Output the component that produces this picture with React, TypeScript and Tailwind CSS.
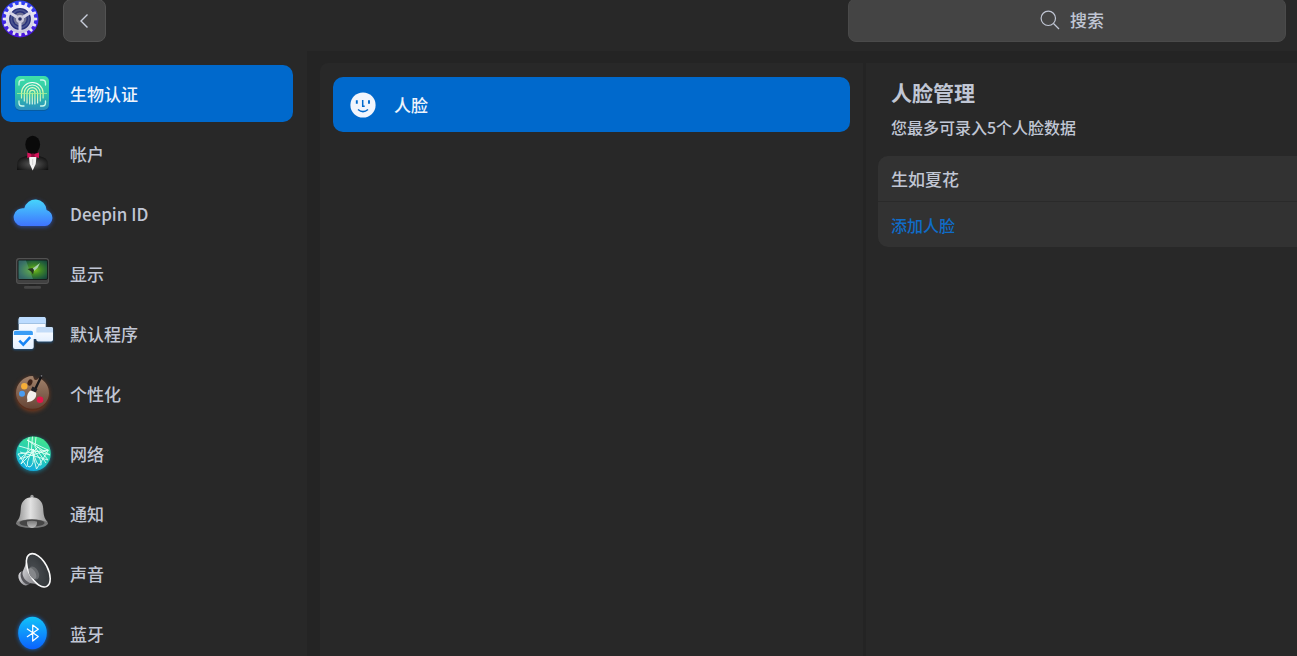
import type { ReactNode } from "react";

function LogoIcon() {
  const teeth = Array.from({ length: 16 }, (_, i) => i * 22.5);
  return (
    <svg viewBox="0 0 38 38" className="size-[38px] shrink-0" aria-hidden="true">
      <defs>
        <linearGradient id="logoBg" x1="0" y1="0" x2="0" y2="1">
          <stop offset="0" stopColor="#2f45f5" />
          <stop offset="1" stopColor="#4a12d8" />
        </linearGradient>
        <linearGradient id="logoGear" x1="0" y1="0" x2="0" y2="1">
          <stop offset="0" stopColor="#f3f2fb" />
          <stop offset="1" stopColor="#c9c6dc" />
        </linearGradient>
      </defs>
      <circle cx="19" cy="19" r="18.5" fill="url(#logoBg)" />
      {teeth.map((a) => (
        <path key={a} d="M17.4 6 17.8 1.8h2.4L20.6 6Z" fill="#e6e4f3" transform={`rotate(${a} 19 19)`} />
      ))}
      <circle cx="19" cy="19" r="12.6" fill="#28307a" stroke="url(#logoGear)" strokeWidth="3.4" />
      <circle cx="19" cy="19" r="8.8" fill="none" stroke="#4b5590" strokeWidth="1.8" />
      <circle cx="19" cy="19" r="6.5" fill="#6f7294" />
      <path d="M19 19 8.5 12.5M19 19l10.5-6.500M19 19v12" stroke="#d6d4e6" strokeWidth="3" />
      <circle cx="19" cy="19" r="4" fill="#c9c7da" />
      <circle cx="19" cy="19" r="1.8" fill="#2a2f66" />
    </svg>
  );
}

function FingerprintIcon() {
  return (
    <>
      <defs>
        <linearGradient id="fpBg" x1="0" y1="0" x2="0" y2="1">
          <stop offset="0" stopColor="#3fe0a8" />
          <stop offset="0.55" stopColor="#2fbfa8" />
          <stop offset="1" stopColor="#2a8fc0" />
        </linearGradient>
        <linearGradient id="fpLine" x1="0" y1="17" x2="0" y2="40" gradientUnits="userSpaceOnUse">
          <stop offset="0" stopColor="#ffffff" />
          <stop offset="0.5" stopColor="#c8f59a" />
          <stop offset="1" stopColor="#d8f5f5" />
        </linearGradient>
      </defs>
      <rect x="11" y="12" width="34" height="34" rx="5" fill="#0b4f77" opacity="0.5" />
      <rect x="11" y="11" width="34" height="34" rx="5" fill="url(#fpBg)" />
      <path
        d="M15 20v-2q0-3 3-3h2M36.5 15h2q3 0 3 3v2M41.5 36v2q0 3-3 3h-2M20 41h-2q-3 0-3-3v-2"
        fill="none" stroke="#c9f7ea" strokeWidth="1.3" strokeLinecap="round"
      />
      <g fill="none" stroke="url(#fpLine)" strokeWidth="1.2" strokeLinecap="round">
        <path d="M17.5 33v-5a10.8 10.5 0 0 1 21.600 0v5" />
        <path d="M20.300 36v-8a8 8 0 0 1 16 0v8" />
        <path d="M23 38V28a5.300 5.300 0 0 1 10.600 0v10" />
        <path d="M25.700 39V28a2.600 2.600 0 0 1 5.200 0v11" />
        <path d="M28.300 28v11" />
      </g>
      <path d="M13 28.5h30" stroke="#a9f29a" strokeWidth="1" opacity="0.8" />
    </>
  );
}

function AccountIcon() {
  return (
    <>
      <defs>
        <radialGradient id="acSuit" cx="0.5" cy="0.6" r="0.6">
          <stop offset="0" stopColor="#5a5a5a" />
          <stop offset="1" stopColor="#111111" />
        </radialGradient>
      </defs>
      <ellipse cx="28.7" cy="19.5" rx="7.4" ry="8.7" fill="#0a0a0a" />
      <path d="M24 25h9.5v6H24z" fill="#0a0a0a" />
      <path d="M13 45v-5q0-6 5-7.500l6-2h9.500l6 2q4.700 1.500 4.700 7.500v5Z" fill="url(#acSuit)" />
      <path d="M25 32h7.500l-.8 7-3 6.500-3-6.500Z" fill="#f4f4f4" />
      <path d="M28.7 34v6" stroke="#bbbbbb" strokeWidth="0.6" />
      <path d="m23.300 27.500 4.700 1.500v2.500l-4.700 1.500ZM35 27.500l-5 1.500v2.500l5 1.500Z" fill="#d4145a" />
      <rect x="27.300" y="28.600" width="3.200" height="3.300" rx="0.700" fill="#8e0d3c" />
    </>
  );
}

function CloudIcon() {
  return (
    <>
      <defs>
        <linearGradient id="cloudBg" x1="0" y1="0" x2="0" y2="1">
          <stop offset="0" stopColor="#46d5fb" />
          <stop offset="1" stopColor="#3f74ff" />
        </linearGradient>
      </defs>
      <path
        d="M17 41a9 9 0 1 1 3.300-17.700a11.300 11.300 0 0 1 22.300 1.700A8.200 8.200 0 0 1 41 41Z"
        fill="url(#cloudBg)" className="drop-shadow-[0_1px_2px_#2f60e0aa]"
      />
    </>
  );
}

function DisplayIcon() {
  return (
    <>
      <defs>
        <radialGradient id="dpScreen" cx="0.55" cy="0.5" r="0.6">
          <stop offset="0" stopColor="#7fc21c" />
          <stop offset="0.4" stopColor="#3f8726" />
          <stop offset="0.8" stopColor="#1f5a3c" />
          <stop offset="1" stopColor="#174638" />
        </radialGradient>
      </defs>
      <rect x="25" y="38" width="7" height="4" fill="#252525" />
      <rect x="20" y="41" width="17" height="2.8" rx="1.2" fill="#454545" />
      <rect x="12" y="13" width="33" height="26" rx="3" fill="#414141" />
      <rect x="12.5" y="13.5" width="32" height="25" rx="2.5" fill="none" stroke="#555555" strokeWidth="0.8" />
      <rect x="14" y="15" width="29.6" height="19.5" rx="1.5" fill="url(#dpScreen)" stroke="#111111" strokeWidth="0.8" />
      <path d="M14.5 15.5H22l7 18.500H14.500Z" fill="#8fc6e8" opacity="0.25" />
      <path d="m28 24 8-6-2.500 5-3.500 3Z" fill="#a9cfae" />
      <path d="m23.500 24 5-1 1.500 2-1 4.500-2-3Z" fill="#25351f" />
    </>
  );
}

function DefaultAppsIcon() {
  return (
    <>
      <defs>
        <linearGradient id="daPaper" x1="0" y1="0" x2="0" y2="1">
          <stop offset="0" stopColor="#ffffff" />
          <stop offset="1" stopColor="#e4f0ff" />
        </linearGradient>
      </defs>
      <g className="drop-shadow-[0_1px_1px_#1d66a8aa]">
        <rect x="14.7" y="12" width="27" height="22" rx="2" fill="url(#daPaper)" />
        <path d="M14.7 18.500V14q0-2 2-2h23q2 0 2 2v4.500Z" fill="#bcdcff" />
        <path d="M14.7 18.500h27" stroke="#93b7dc" strokeWidth="0.8" />
        <rect x="32.300" y="22" width="16.700" height="14.500" rx="2" fill="url(#daPaper)" />
        <path d="M32.300 27.500V24q0-2 2-2H47q2 0 2 2v3.500Z" fill="#c3dcf8" />
        <rect x="9" y="25" width="20.700" height="19" rx="2" fill="url(#daPaper)" />
        <path d="M9.800 30v-2.500q0-1.700 1.700-1.700h15.700q1.700 0 1.700 1.700V30Z" fill="#3a9df5" />
      </g>
      <path d="m15.300 35.700 4 4 6.900-7.500" fill="none" stroke="#1684f5" strokeWidth="2.6" />
    </>
  );
}

function PaletteIcon() {
  return (
    <>
      <defs>
        <linearGradient id="plWood" x1="0" y1="0" x2="0" y2="1">
          <stop offset="0" stopColor="#a2836c" />
          <stop offset="1" stopColor="#664536" />
        </linearGradient>
      </defs>
      <g className="drop-shadow-[0_1px_2px_#a34a1caa]">
        <path
          d="M28.500 11c1.500 0 .5 3.500 3 4s2-2.500 4.500-1.500c5.500 2.500 9 8 9 14.500a16.500 16.500 0 0 1-33 0c0-9 7.500-17 16.500-17Z"
          fill="#5a2e1d" transform="translate(0 1)"
        />
        <path
          d="M28.500 11c1.500 0 .5 3.500 3 4s2-2.500 4.500-1.500c5.500 2.500 9 8 9 14.500a16.500 15.800 0 0 1-33 0c0-9 7.500-17 16.500-17Z"
          fill="url(#plWood)"
        />
      </g>
      <ellipse cx="26" cy="17.5" rx="2.3" ry="3.2" transform="rotate(25 26 17.5)" fill="#3d2218" />
      <circle cx="20.3" cy="21.3" r="3.2" fill="#f6ae37" />
      <circle cx="18" cy="28.7" r="3" fill="#4a9cf0" />
      <circle cx="36" cy="34.7" r="3.3" fill="#e5164a" />
      <path d="m31.500 23.500 6-12.500" stroke="#17171a" strokeWidth="2.4" strokeLinecap="round" />
      <circle cx="37.5" cy="10.8" r="0.9" fill="#77777c" />
      <path d="m28.500 21.500 5 2.500-1.700 3.500-5-2.200Z" fill="#1f1f24" />
      <path d="m26.800 25.500 5.300 2.200c1 5-2.500 8.800-9.300 9.500 1.500-2-.3-3.700.5-6.700.7-2.500 1.700-4 3.500-5Z" fill="#f3f0ec" />
    </>
  );
}

function NetworkIcon() {
  return (
    <>
      <defs>
        <linearGradient id="nwBg" x1="0.7" y1="0" x2="0.3" y2="1">
          <stop offset="0" stopColor="#43e68c" />
          <stop offset="0.5" stopColor="#26cdb4" />
          <stop offset="1" stopColor="#11a9e4" />
        </linearGradient>
        <clipPath id="nwClip"><circle cx="29.5" cy="28.7" r="17.2" /></clipPath>
      </defs>
      <circle cx="29.5" cy="28.7" r="17.3" fill="url(#nwBg)" className="drop-shadow-[0_1px_2px_#10a4c8aa]" />
      <g clipPath="url(#nwClip)" fill="none" stroke="#e2fff5" strokeWidth="0.9">
        <path d="m15 21 31 9-23-15 21 10-30 4 9 13M28.500 11l-1 13-12 10 29-9-12 19-5-20" />
        <path d="m25 12-1 13-7 14 17-17 10 13-28-8M32 12l-1 10 11 16" />
        <path d="M29 24q-9 17-4 18 6 0 4-18 3 18 8 16 2-3-8-16" />
      </g>
    </>
  );
}

function BellIcon() {
  return (
    <>
      <defs>
        <linearGradient id="blBody" x1="0" y1="0" x2="1" y2="0">
          <stop offset="0" stopColor="#8d8d8d" />
          <stop offset="0.45" stopColor="#e2e2e2" />
          <stop offset="1" stopColor="#949494" />
        </linearGradient>
        <linearGradient id="blBall" x1="0" y1="0" x2="0" y2="1">
          <stop offset="0" stopColor="#7b7b7b" />
          <stop offset="1" stopColor="#bdbdbd" />
        </linearGradient>
      </defs>
      <circle cx="28" cy="11.5" r="1.7" fill="#9c9c9c" />
      <ellipse cx="28" cy="38.3" rx="16" ry="4.8" fill="#777777" />
      <path d="M28 12.300c7 0 10.800 4.700 11.200 11 .4 6 .5 9.500 4.500 14-8-4-23.400-4-31.400 0 4-4.500 4.100-8 4.500-14 .4-6.300 4.200-11 11.200-11Z" fill="url(#blBody)" />
      <ellipse cx="28" cy="38" rx="12.5" ry="3.4" fill="#454545" />
      <path d="M23 36.500q5-1.300 10 0v1.500a5 5 0 0 1-10 0Z" fill="url(#blBall)" />
    </>
  );
}

function SoundIcon() {
  return (
    <>
      <defs>
        <linearGradient id="sdBack" x1="0" y1="0" x2="1" y2="1">
          <stop offset="0" stopColor="#ededf0" />
          <stop offset="0.5" stopColor="#a4a4a8" />
          <stop offset="1" stopColor="#77777b" />
        </linearGradient>
        <radialGradient id="sdCone" cx="0.35" cy="0.45" r="0.6">
          <stop offset="0" stopColor="#484c50" />
          <stop offset="1" stopColor="#34383b" />
        </radialGradient>
      </defs>
      <ellipse cx="20" cy="33.5" rx="5" ry="7.5" transform="rotate(-28 20 33.5)" fill="url(#sdBack)" />
      <ellipse cx="22" cy="32.5" rx="4.7" ry="7.5" transform="rotate(-28 22 32.5)" fill="#55555a" />
      <path d="M26 8.500c-4 3-3 7-5 12.500-1.300 3.500-2.500 5-2.500 8 1 6 6 9 10 9.500 5 .5 7 4 12 4Z" fill="url(#sdBack)" />
      <ellipse cx="34.3" cy="25.3" rx="9.4" ry="18.2" transform="rotate(-28 34.3 25.3)" fill="url(#sdCone)" stroke="#fafafa" strokeWidth="1.6" />
      <ellipse cx="30" cy="28" rx="4.5" ry="7" transform="rotate(-28 30 28)" fill="#66696c" />
      <ellipse cx="28.5" cy="28.5" rx="3" ry="6" transform="rotate(-28 28.5 28.5)" fill="#85878a" />
    </>
  );
}

function BluetoothIcon() {
  return (
    <>
      <defs>
        <linearGradient id="btBg" x1="0" y1="0" x2="0" y2="1">
          <stop offset="0" stopColor="#12c3f8" />
          <stop offset="1" stopColor="#0b62ff" />
        </linearGradient>
      </defs>
      <ellipse cx="28.5" cy="28" rx="14.3" ry="16.2" fill="url(#btBg)" className="drop-shadow-[0_0_2px_#0b7dffcc]" />
      <path d="m23.300 24 11 7.500-5.600 4.500V20l5.600 4.300-11 7.400" fill="none" stroke="#ffffff" strokeWidth="1.2" strokeLinejoin="round" strokeLinecap="round" />
    </>
  );
}

const modules: { name: string; icon: ReactNode }[] = [
  { name: "生物认证", icon: <FingerprintIcon /> },
  { name: "帐户", icon: <AccountIcon /> },
  { name: "Deepin ID", icon: <CloudIcon /> },
  { name: "显示", icon: <DisplayIcon /> },
  { name: "默认程序", icon: <DefaultAppsIcon /> },
  { name: "个性化", icon: <PaletteIcon /> },
  { name: "网络", icon: <NetworkIcon /> },
  { name: "通知", icon: <BellIcon /> },
  { name: "声音", icon: <SoundIcon /> },
  { name: "蓝牙", icon: <BluetoothIcon /> },
];

export default function App() {
  return (
    <div className="flex h-screen flex-col overflow-hidden bg-[#242424] font-['Noto_Sans_CJK_SC','Noto_Sans',sans-serif] text-[17px] font-medium text-[#c0c6d4]">
      <header className="flex h-[51px] shrink-0 items-start bg-[#282828] pr-[11px]">
        <div className="pl-px">
          <LogoIcon />
        </div>
        <button
          type="button"
          aria-label="返回"
          className="-mt-px ml-6 flex h-[43px] w-[43px] items-center justify-center rounded-lg border border-[#525252] bg-[#444444] pr-0.5"
        >
          <svg viewBox="0 0 10 16" className="h-4 w-2.5" fill="none" stroke="#c9cedb" strokeWidth="1.4" aria-hidden="true">
            <path d="M8.500 1.500 2 8l6.500 6.500" />
          </svg>
        </button>
        <label className="-mt-0.5 ml-auto flex h-11 w-[438px] items-center justify-center gap-2.5 rounded-lg border border-[#4a4a4a] bg-[#444444] pl-3">
          <svg viewBox="0 0 20 20" className="size-5" fill="none" stroke="#c0c6d4" strokeWidth="1.2" aria-hidden="true">
            <circle cx="8.3" cy="8.3" r="7.2" />
            <path d="m13.500 13.500 5.500 5.500" />
          </svg>
          <input
            type="text"
            aria-label="搜索"
            placeholder="搜索"
            className="w-9 bg-transparent outline-none placeholder:text-[#c0c6d4] placeholder:opacity-100"
          />
        </label>
      </header>

      <div className="flex min-h-0 flex-1">
        <nav className="w-[307px] shrink-0 overflow-y-auto bg-[#282828] pt-3.5 pr-3.5 pl-px [scrollbar-width:none]">
          <ul className="flex flex-col gap-[3px]">
            {modules.map((m, i) => (
              <li key={m.name}>
                <button
                  type="button"
                  aria-current={i === 0 ? "page" : undefined}
                  className={
                    i === 0
                      ? "flex h-[57px] w-full items-center gap-[9px] rounded-[10px] bg-[#0069cc] pl-[3px] text-left text-[#eef3fb]"
                      : "flex h-[57px] w-full items-center gap-[9px] rounded-[10px] pl-[3px] text-left"
                  }
                >
                  <svg viewBox="0 0 57 57" className="size-[57px] shrink-0" aria-hidden="true">
                    {m.icon}
                  </svg>
                  <span>{m.name}</span>
                </button>
              </li>
            ))}
          </ul>
        </nav>

        <main className="grid min-w-0 flex-1 grid-cols-[minmax(0,543fr)_minmax(0,431fr)] gap-[3px] pt-3 pl-[13px]">
          <section className="rounded-tl-lg bg-[#282828] px-[13px] pt-3.5">
            <button
              type="button"
              className="flex h-[55px] w-full items-center gap-[18px] rounded-[10px] bg-[#0069cc] pl-[17px] text-left text-[#eef3fb]"
            >
              <svg viewBox="0 0 26 26" className="size-[26px] shrink-0" aria-hidden="true">
                <circle cx="13" cy="13" r="12.6" fill="#f1f5fd" />
                <g fill="none" stroke="#0069cc" strokeWidth="1.5">
                  <path d="M6.800 8.300v3.400M19 8.300v3.400" strokeWidth="1.9" />
                  <path d="M12.700 8v6.300h2" />
                  <path d="M8 17.500q5 4.300 10 0" />
                </g>
              </svg>
              <span>人脸</span>
            </button>
          </section>

          <section className="overflow-y-auto bg-[#282828] pt-3.5 pl-3">
            <div className="pl-[13px]">
              <h1 className="text-[21px] leading-[30px] font-bold">人脸管理</h1>
              <p className="pt-2 text-base leading-6">您最多可录入5个人脸数据</p>
            </div>
            <div className="mt-[17px] flex flex-col gap-px overflow-hidden rounded-l-[10px] bg-[#2a2a2a]">
              <div className="flex h-[45px] items-center bg-[#323232] pl-[13px]">生如夏花</div>
              <button type="button" className="flex h-[45px] items-center bg-[#323232] pl-[13px] text-base text-[#0f6cc8]">
                添加人脸
              </button>
            </div>
          </section>
        </main>
      </div>
    </div>
  );
}
